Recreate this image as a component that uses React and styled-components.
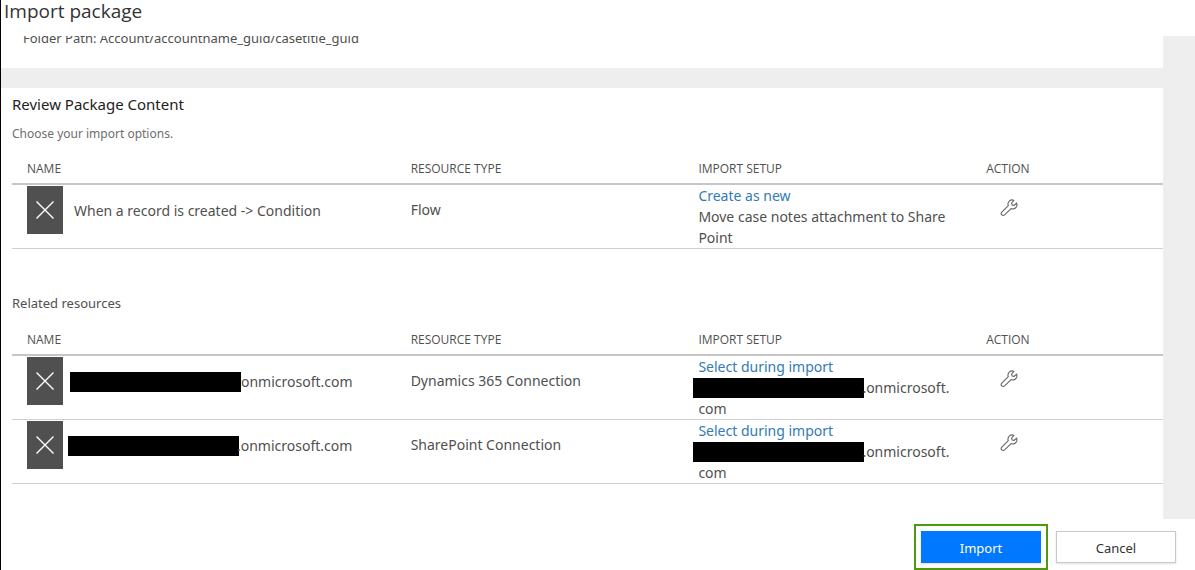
import React from 'react'
import styled, { createGlobalStyle } from 'styled-components';

const GlobalStyle = createGlobalStyle`
    * {
        box-sizing: border-box;
    }
    body {
        margin: 0;
        background: #fff;
        color: #505050;
        font-family: "Noto Sans", "Open Sans", sans-serif;
        font-size: 14px;
        line-height: 21px;
    }
    h1, h2, h3, p {
        margin: 0;
        font-weight: 400;
    }
`;

const Dialog = styled.main`
    display: flex;
    flex-direction: column;
    height: 100vh;
    border-left: 1px solid #000;
`;

const Title = styled.h1`
    flex: none;
    height: 36px;
    padding-left: 3px;
    color: #333;
    font-family: "Open Sans", sans-serif;
    font-size: 19px;
    line-height: 22px;
`;

const ScrollPane = styled.div`
    flex: 1;
    min-height: 0;
    overflow: hidden;
    display: flex;
    flex-direction: column;
    gap: 20px;
    padding-right: 32px;
    background: #eee;
`;

// this panel is scrolled most of the way out of view
const DetailsPanel = styled.section`
    flex: none;
    margin-top: -8px;
    padding: 0 22px 22px;
    background: #fff;
    font-size: 13px;
`;

const FolderPath = styled.p`
    height: 18px;
    overflow: hidden;
`;

const Panel = styled.section`
    flex: 1 0 auto;
    padding: 6px 0 24px 11px;
    background: #fff;
`;

const PanelTitle = styled.h2`
    color: #222;
    font-size: 15px;
    line-height: 21px;
`;

const Hint = styled.p`
    margin-top: 8px;
    color: #6e6e6e;
    font-size: 12px;
`;

const SubTitle = styled.h3`
    margin-top: 44px;
    padding-bottom: 2px;
    font-size: 13px;
    line-height: 20px;
`;

const ResourceTable = styled.table`
    width: 100%;
    margin-top: 14px;
    table-layout: fixed;
    border-collapse: separate;
    border-spacing: 0;
`;

const HeadCell = styled.th`
    width: ${props => props.$width};
    height: 27px;
    padding: 2px 15px 5px;
    border-bottom: 2px solid #c6c6c6;
    font-family: "Open Sans", sans-serif;
    font-size: 12px;
    line-height: 18px;
    font-weight: 400;
    text-align: left;
    text-transform: uppercase;
`;

const Cell = styled.td`
    height: 64px;
    padding: ${props => props.$middle ? '14px' : '0'} 15px 0;
    border-bottom: 1px solid #d0d0d0;
    vertical-align: top;
`;

const NameBox = styled.div`
    display: flex;
    align-items: center;
    margin-top: 1px;
`;

const Tile = styled.span`
    flex: none;
    display: flex;
    align-items: center;
    justify-content: center;
    width: 36px;
    height: 48px;
    margin-right: 11px;
    background: #505050;
`;

const Redacted = styled.span`
    display: inline-block;
    width: 171px;
    height: 20px;
    margin: 1px ${props => props.$overlap ? '-2px' : '0'} 0 ${props => props.$shift};
    background: #000;
    vertical-align: top;
`;

const SetupLink = styled.a`
    display: block;
    color: #337ab7;
    text-decoration: none;
`;

const IconButton = styled.button`
    display: block;
    width: 18px;
    height: 18px;
    margin-left: 14px;
    padding: 0;
    border: 0;
    background: none;
    cursor: pointer;
`;

const Footer = styled.footer`
    flex: none;
    display: flex;
    align-items: center;
    justify-content: flex-end;
    gap: 8px;
    height: 51px;
    padding: 4px 19px 0 0;
`;

const Highlight = styled.div`
    padding: 5px;
    border: 2px solid #4b9b0a;
`;

const Button = styled.button`
    display: block;
    width: 120px;
    height: 32px;
    padding: 2px 0 0;
    border: 1px solid ${props => props.$primary ? '#0078ff' : '#c8c8c8'};
    background: ${props => props.$primary ? '#0078ff' : '#fff'};
    box-shadow: 0 1px 2px rgba(0, 0, 0, .12);
    color: ${props => props.$primary ? '#fff' : '#333'};
    font-family: inherit;
    font-size: 13px;
    cursor: pointer;
`;

const CrossIcon = () => (
    <svg width="20" height="20" viewBox="0 0 20 20" stroke="#fff" strokeWidth="1.4" aria-hidden="true">
        <path d="M1.5 1.5l17 17M18.5 1.5l-17 17" />
    </svg>
)

const WrenchIcon = () => (
    <svg width="18" height="18" viewBox="0 0 18 18" fill="none" stroke="#666" strokeWidth="1.1" strokeLinejoin="round" aria-hidden="true">
        <path d="M13.9 1.4A4.1 4.1 0 0 0 8.3 6.6L1.8 13.1A1.9 1.9 0 0 0 4.6 15.9L11.1 9.6A4.1 4.1 0 0 0 16.5 4.1L14 6.5L12.2 6L11.6 4Z" />
    </svg>
)

const packageItems = [
    { id: 1, name: 'When a record is created -> Condition', type: 'Flow', action: 'Create as new', setup: 'Move case notes attachment to Share Point' }
]

const relatedItems = [
    { id: 2, domain: 'onmicrosoft.com', type: 'Dynamics 365 Connection', action: 'Select during import', shift: '-4px' },
    { id: 3, domain: '.onmicrosoft.com', type: 'SharePoint Connection', action: 'Select during import', shift: '-6px' }
]

const Resources = ({ items }) => (
    <ResourceTable>
        <thead>
            <tr>
                <HeadCell $width="33.33%">Name</HeadCell>
                <HeadCell $width="25%">Resource type</HeadCell>
                <HeadCell $width="25%">Import setup</HeadCell>
                <HeadCell>Action</HeadCell>
            </tr>
        </thead>
        <tbody>
            {items.map(item => (
                <tr key={item.id}>
                    <Cell>
                        <NameBox>
                            <Tile><CrossIcon /></Tile>
                            {item.name
                                ? <span>{item.name}</span>
                                : <span><Redacted $shift={item.shift} $overlap={item.domain.startsWith('.')} />{item.domain}</span>}
                        </NameBox>
                    </Cell>
                    <Cell $middle>{item.type}</Cell>
                    <Cell>
                        <SetupLink href="#">{item.action}</SetupLink>
                        {item.setup || <><Redacted $shift="-5px" $overlap />.onmicrosoft.<br />com</>}
                    </Cell>
                    <Cell $middle>
                        <IconButton type="button" aria-label="Configure"><WrenchIcon /></IconButton>
                    </Cell>
                </tr>
            ))}
        </tbody>
    </ResourceTable>
)

const App = () => {
    return (
        <>
            <GlobalStyle />
            <Dialog>
                <Title>Import package</Title>
                <ScrollPane>
                    <DetailsPanel>
                        <FolderPath>Folder Path: Account/accountname_guid/casetitle_guid</FolderPath>
                    </DetailsPanel>
                    <Panel>
                        <PanelTitle>Review Package Content</PanelTitle>
                        <Hint>Choose your import options.</Hint>
                        <Resources items={packageItems} />
                        <SubTitle>Related resources</SubTitle>
                        <Resources items={relatedItems} />
                    </Panel>
                </ScrollPane>
                <Footer>
                    <Highlight>
                        <Button type="button" $primary>Import</Button>
                    </Highlight>
                    <Button type="button">Cancel</Button>
                </Footer>
            </Dialog>
        </>
    )
}

export default App
